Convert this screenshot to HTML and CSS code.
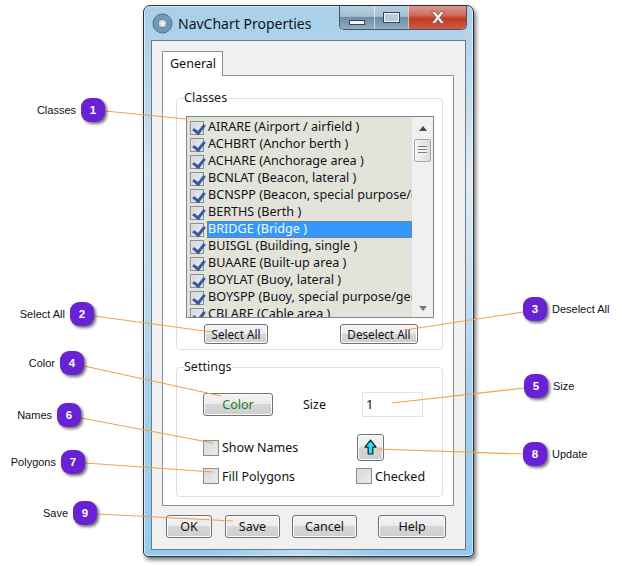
FILE: index.html
```html
<!DOCTYPE html>
<html lang="en">
<head>
<meta charset="utf-8">
<title>NavChart Properties</title>
<link rel="stylesheet" href="styles.css">
</head>
<body>
<div class="stage">
  <section class="window">
    <header class="titlebar">
      <svg class="app-icon" viewBox="0 0 22 22" aria-hidden="true">
        <circle cx="11" cy="11" r="10" fill="#8a97a3" stroke="#5d6870"/>
        <circle cx="11" cy="11" r="7.5" fill="none" stroke="#4aa3dc" stroke-width="2"/>
        <circle cx="11" cy="11" r="4.5" fill="#cfd8df" stroke="#6b7780"/>
        <circle cx="11" cy="11" r="2" fill="#eef3f6"/>
      </svg>
      <h1 class="title">NavChart Properties</h1>
      <div class="controls">
        <div class="ctl ctl-min"><span class="glyph-min"></span></div>
        <div class="ctl ctl-max"><span class="glyph-max"></span></div>
        <div class="ctl ctl-close">
          <svg class="glyph-close" viewBox="0 0 16 14" aria-hidden="true"><path d="M1.5 1h3.600L8 4.600 10.900 1h3.600L9.900 7l4.600 6h-3.600L8 9.400 5.100 13H1.500l4.600-6z" fill="#f1f1f1" stroke="#6d4a45" stroke-width=".7"/></svg>
        </div>
      </div>
    </header>
    <div class="client">
      <div class="tabs"><div class="tab">General</div></div>
      <div class="tabpane">
        <fieldset class="group group-classes">
          <legend>Classes</legend>
          <div class="listbox">
            <ul class="items">
              <li class="item"><span class="check on"></span><span class="name">AIRARE (Airport / airfield )</span></li>
              <li class="item"><span class="check on"></span><span class="name">ACHBRT (Anchor berth )</span></li>
              <li class="item"><span class="check on"></span><span class="name">ACHARE (Anchorage area )</span></li>
              <li class="item"><span class="check on"></span><span class="name">BCNLAT (Beacon, lateral )</span></li>
              <li class="item"><span class="check on"></span><span class="name">BCNSPP (Beacon, special purpose/general )</span></li>
              <li class="item"><span class="check on"></span><span class="name">BERTHS (Berth )</span></li>
              <li class="item"><span class="check on"></span><span class="name selected">BRIDGE (Bridge )</span></li>
              <li class="item"><span class="check on"></span><span class="name">BUISGL (Building, single )</span></li>
              <li class="item"><span class="check on"></span><span class="name">BUAARE (Built-up area )</span></li>
              <li class="item"><span class="check on"></span><span class="name">BOYLAT (Buoy, lateral )</span></li>
              <li class="item"><span class="check on"></span><span class="name">BOYSPP (Buoy, special purpose/general )</span></li>
              <li class="item"><span class="check on"></span><span class="name">CBLARE (Cable area )</span></li>
            </ul>
            <div class="scrollbar">
              <span class="arrow arrow-up"></span>
              <div class="thumb"><span class="grip"></span></div>
              <span class="arrow arrow-down"></span>
            </div>
          </div>
          <div class="row-all">
            <button class="btn btn-select">Select All</button>
            <button class="btn btn-deselect">Deselect All</button>
          </div>
        </fieldset>
        <fieldset class="group group-settings">
          <legend>Settings</legend>
          <div class="settings-grid">
            <button class="btn btn-color">Color</button>
            <span class="size-label">Size</span>
            <div class="size-input">1</div>
            <label class="opt opt-names"><span class="check"></span>Show Names</label>
            <button class="btn btn-update" aria-label="Update">
              <svg viewBox="0 0 14 18" aria-hidden="true"><path d="M7 1l6 7.500H9.500V16h-5V8.500H1z" fill="#1fe6f2" stroke="#10202a" stroke-width="1.300" stroke-linejoin="round"/></svg>
            </button>
            <label class="opt opt-fill"><span class="check"></span>Fill Polygons</label>
            <label class="opt opt-checked"><span class="check"></span>Checked</label>
          </div>
        </fieldset>
      </div>
      <div class="footer">
        <button class="btn btn-ok">OK</button>
        <button class="btn btn-save">Save</button>
        <button class="btn btn-cancel">Cancel</button>
        <button class="btn btn-help">Help</button>
      </div>
    </div>
  </section>

  <svg class="leaders" viewBox="0 0 624 566" aria-hidden="true">
    <g class="leader-lines">
      <line x1="105" y1="111" x2="186" y2="119"/>
      <line x1="94" y1="316" x2="212" y2="332"/>
      <line x1="523" y1="312" x2="405" y2="330"/>
      <line x1="84" y1="366" x2="221" y2="396"/>
      <line x1="524" y1="388" x2="392" y2="403"/>
      <line x1="81" y1="418" x2="213" y2="443"/>
      <line x1="85" y1="463" x2="213" y2="472"/>
      <line x1="523" y1="454" x2="377" y2="449"/>
      <line x1="97" y1="514" x2="233" y2="521"/>
    </g>
  </svg>

  <div class="callout c1"><span class="label">Classes</span><span class="badge">1</span></div>
  <div class="callout c2"><span class="label">Select All</span><span class="badge">2</span></div>
  <div class="callout c3"><span class="badge">3</span><span class="label">Deselect All</span></div>
  <div class="callout c4"><span class="label">Color</span><span class="badge">4</span></div>
  <div class="callout c5"><span class="badge">5</span><span class="label">Size</span></div>
  <div class="callout c6"><span class="label">Names</span><span class="badge">6</span></div>
  <div class="callout c7"><span class="label">Polygons</span><span class="badge">7</span></div>
  <div class="callout c8"><span class="badge">8</span><span class="label">Update</span></div>
  <div class="callout c9"><span class="label">Save</span><span class="badge">9</span></div>
</div>
</body>
</html>
```
FILE: styles.css
```css
* { box-sizing: border-box; }
html, body { margin: 0; padding: 0; background: #fff; }
body { font-family: "Noto Sans", "Open Sans", sans-serif; font-size: 12.500px; color: #111; }
.stage { position: relative; width: 624px; height: 566px; overflow: hidden; }

/* window */
.window {
  position: absolute; left: 143px; top: 5px; width: 331px; height: 552px;
  border: 1px solid #2b3136; border-radius: 7px 7px 5px 5px;
  background:
    linear-gradient(115deg, rgba(255,255,255,0) 55%, rgba(255,255,255,.35) 70%, rgba(255,255,255,0) 85%),
    linear-gradient(180deg, #a9cfe9 0%, #b9d9ee 20%, #cfe3f0 30%, #a6d0ee 70%, #94caf0 100%);
  box-shadow: 2px 3px 4px rgba(0,0,0,.55), inset 0 0 0 1px rgba(255,255,255,.55);
  display: flex; flex-direction: column;
  padding: 0 7px 6px;
}
.titlebar { height: 34px; display: flex; align-items: flex-start; flex: none; }
.app-icon { width: 21px; height: 21px; margin: 7px 0 0 1px; flex: none; }
.title { margin: 6px 0 0 5px; font-size: 14px; font-weight: 400; line-height: 24px; color: #0a1420; white-space: nowrap; }
.controls { margin-left: auto; display: flex; height: 24px; border: 1px solid #4a5660; border-top: 0; border-radius: 0 0 5px 5px; overflow: hidden; flex: none; margin-right: -1px; }
.ctl { height: 23px; display: flex; align-items: center; justify-content: center; border-left: 1px solid rgba(255,255,255,.6); }
.ctl:first-child { border-left: 0; }
.ctl-min, .ctl-max { width: 34px; background: linear-gradient(180deg, #b5cee0 0%, #a5c0d4 45%, #6f8da5 50%, #8eaec6 100%); }
.ctl-close { width: 58px; background: linear-gradient(180deg, #d99a90 0%, #cf6b5c 40%, #c23a26 55%, #cc5a45 100%); }
.glyph-min { width: 16px; height: 5px; margin-top: 9px; border: 1px solid #39444f; background: #f3f5f6; }
.glyph-max { width: 17px; height: 11px; border: 1px solid #39444f; background: #b8cddd; box-shadow: inset 0 0 0 1px #eef3f6; }
.glyph-close { width: 16px; height: 15px; }

/* client */
.client { flex: 1; border: 1px solid #6f7a82; background: #f0f0f0; padding: 10px 10px 0; display: flex; flex-direction: column; min-height: 0; }
.tabs { display: flex; height: 25px; flex: none; position: relative; z-index: 1; }
.tab { width: 61px; height: 25px; border: 1px solid #8b8f94; border-bottom: 0; background: #fff; padding: 0 0 0 7px; line-height: 24px; font-size: 12.500px; }
.tabpane { width: 292px; height: 431px; margin-top: -1px; border: 1px solid #8b8f94; background: #fff; padding: 14px 10px 0 13px; flex: none; }

.group { margin: 0; min-width: 0; border: 1px solid #d8e0e8; border-radius: 4px; width: 267px; position: relative; }
.group legend { padding: 0; font-size: 12.500px; line-height: 16px; color: #1a1a1a; }
.group-classes { height: 260px; padding: 0 7px 0 9px; }
.group-classes legend { margin-left: -2px; }
.group-settings { height: 138px; margin-top: 9px; padding: 0; }
.group-settings legend { margin-left: 7px; }

/* list */
.listbox { width: 248px; height: 202px; margin-top: 10px; border: 1px solid #82878c; display: flex; background: #f0f0f0; overflow: hidden; }
.items { list-style: none; margin: 0; padding: 2px 0 0; width: 225px; height: 200px; overflow: hidden; background: #e2e4d9; flex: none; }
.item { display: flex; align-items: center; height: 17px; padding-left: 3px; white-space: nowrap; }
.name { display: block; margin-left: 2px; height: 17px; line-height: 16px; padding-left: 1px; width: 205px; overflow: hidden; flex: none; color: #14101c; font-size: 12.600px; }
.name.selected { background: #3399ff; color: #f4faff; outline: 1px dotted #c46a10; outline-offset: -1px; }
.check { width: 15px; height: 15px; flex: none; border: 1px solid #8e8f8f; background: linear-gradient(135deg, #d3d5d9 0%, #eef0f2 100%); box-shadow: inset 0 0 0 1px #dfe1e3; position: relative; display: inline-block; }
.item .check { width: 14px; height: 14px; margin-right: 1px; }
.check.on::after { content: ""; position: absolute; left: 4px; top: 0; width: 5px; height: 9px; border: solid #3d57a8; border-width: 0 3px 3px 0; transform: rotate(38deg); }

.scrollbar { flex: 1; background: #f0f0f0; position: relative; display: flex; flex-direction: column; align-items: center; padding-top: 9px; }
.arrow { width: 0; height: 0; border-left: 4px solid transparent; border-right: 4px solid transparent; flex: none; }
.arrow-up { border-bottom: 5px solid #4a4a4a; }
.arrow-down { border-top: 5px solid #777; margin-top: auto; margin-bottom: 6px; }
.thumb { width: 17px; height: 23px; margin-top: 8px; border: 1px solid #a4a6a8; border-radius: 2px; background: linear-gradient(90deg, #f4f4f4, #dcdcdc); display: flex; align-items: center; justify-content: center; }
.grip { width: 9px; height: 9px; background: repeating-linear-gradient(180deg, #7d7f82 0, #7d7f82 1px, #f2f2f2 1px, #f2f2f2 3px); }

/* buttons */
.btn { font: inherit; font-size: 12px; color: #14101c; margin: 0; padding: 0; border: 1px solid #6f7275; border-radius: 3px; background: linear-gradient(180deg, #f3f3f3 0%, #ececec 47%, #d6d6d6 50%, #cfcfcf 100%); box-shadow: inset 0 0 0 1px #fbfbfb; cursor: default; }
.row-all { display: flex; justify-content: space-between; padding: 6px 17px 0 18px; }
.btn-select { width: 64px; height: 20px; font-size: 11.700px; }
.btn-deselect { width: 78px; height: 20px; font-size: 11.700px; }

/* settings */
.settings-grid { display: grid; grid-template-columns: 125px 54px 1fr; grid-template-rows: 42px 37px 20px; padding: 12px 0 0 26px; align-items: center; }
.btn-color { width: 70px; height: 23px; color: #14802a; justify-self: start; font-size: 12.500px; margin-bottom: 8px; }
.size-label { margin: 0 0 8px -25px; }
.size-input { width: 61px; height: 25px; margin: 0 0 8px -20px; border: 1px solid #dde4ea; padding-left: 3px; line-height: 23px; background: #fff; font-size: 13px; }
.opt { display: flex; align-items: center; gap: 3px; white-space: nowrap; font-size: 12.500px; }
.opt .check { width: 16px; height: 16px; }
.opt-names { grid-column: 1 / span 2; grid-row: 2; }
.btn-update { grid-column: 3; grid-row: 2; width: 27px; height: 27px; margin-left: -25px; display: flex; align-items: center; justify-content: center; }
.btn-update svg { width: 13px; height: 17px; }
.opt-fill { grid-column: 1 / span 2; grid-row: 3; }
.opt-checked { grid-column: 3; grid-row: 3; margin-left: -26px; }

/* footer */
.footer { display: flex; padding: 9px 0 0 4px; flex: none; }
.footer .btn { height: 23px; font-size: 12.500px; }
.btn-ok { width: 46px; }
.btn-save { width: 55px; margin-left: 13px; }
.btn-cancel { width: 65px; margin-left: 12px; }
.btn-help { width: 68px; margin-left: 21px; }

/* annotations */
.leaders { position: absolute; left: 0; top: 0; width: 624px; height: 566px; pointer-events: none; }
.leader-lines line { stroke: #f5a04a; stroke-width: 1.200; }
.callout { position: absolute; display: flex; align-items: center; gap: 5px; height: 24px; font-family: "Liberation Sans", Arial, sans-serif; font-size: 11px; color: #111; white-space: nowrap; }
.badge { width: 24px; height: 24px; border-radius: 9px; background: #6822d4; color: #fff; font-weight: 700; font-size: 11.500px; display: flex; align-items: center; justify-content: center; box-shadow: 2px 2px 3px rgba(0,0,0,.55); flex: none; }
.c1 { right: 519px; top: 98px; }
.c2 { right: 530px; top: 302px; }
.c3 { left: 523px; top: 297px; }
.c4 { right: 540px; top: 351px; }
.c5 { left: 524px; top: 374px; }
.c6 { right: 543px; top: 403px; }
.c7 { right: 539px; top: 450px; }
.c8 { left: 523px; top: 442px; }
.c9 { right: 527px; top: 501px; }
```
